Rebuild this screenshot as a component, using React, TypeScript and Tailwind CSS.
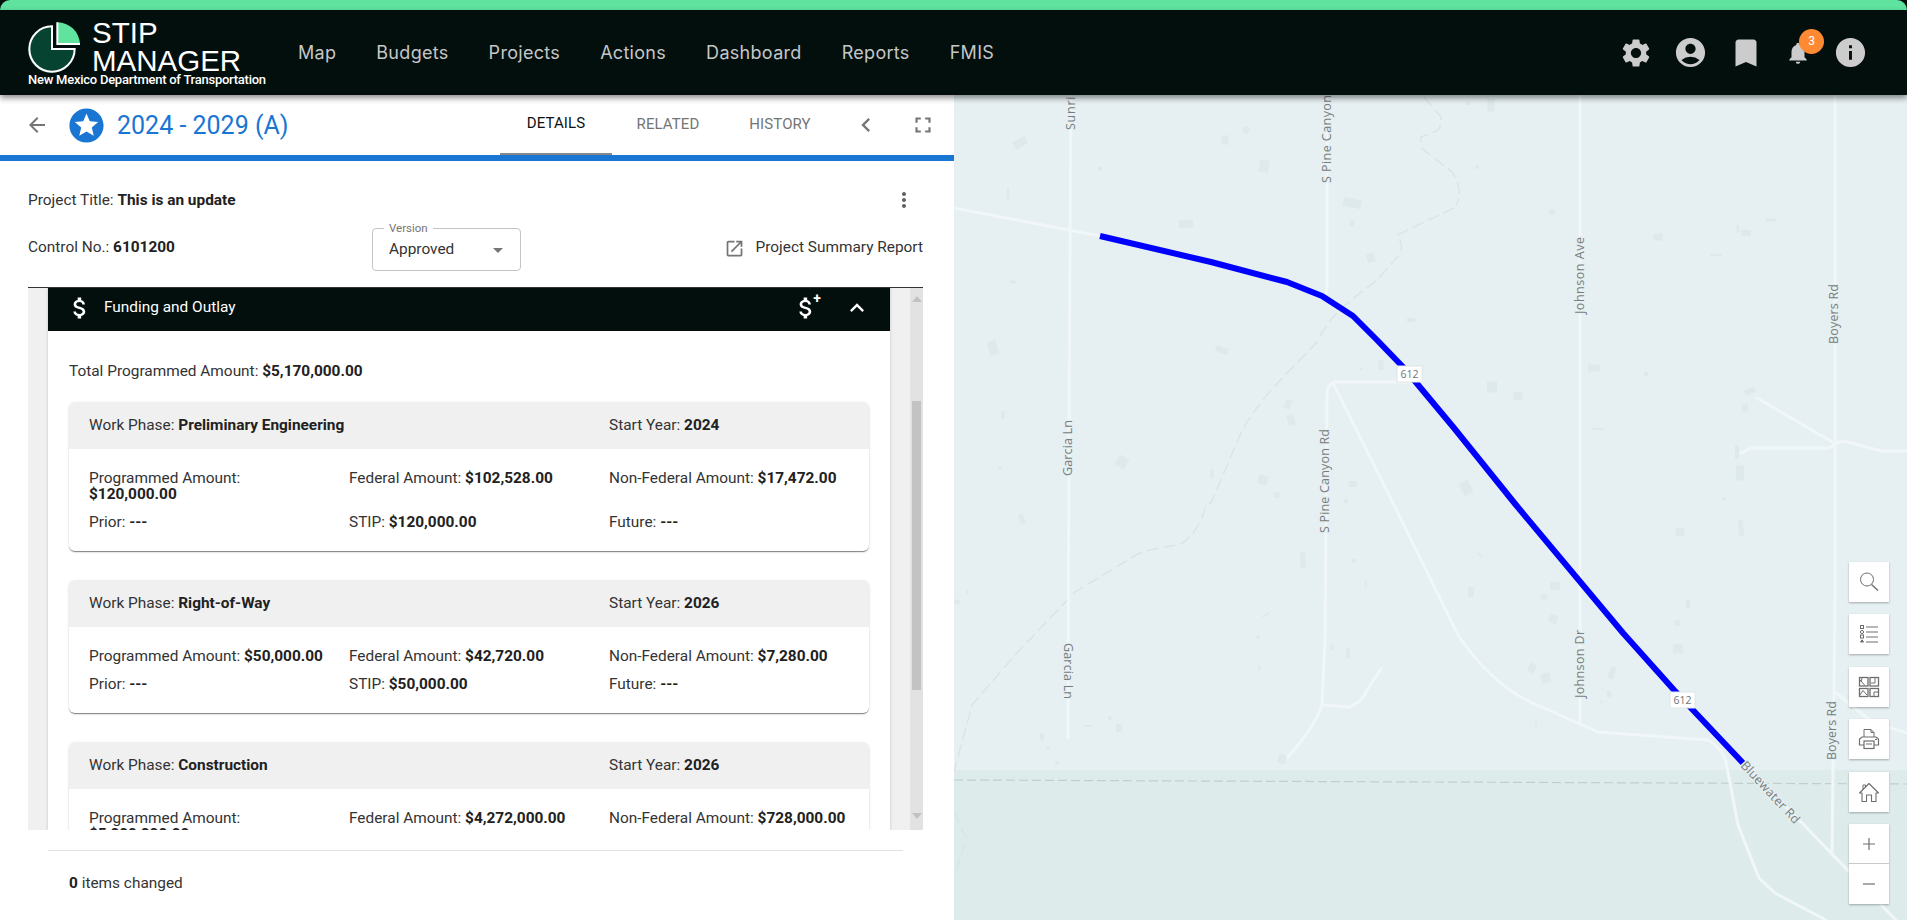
import React from "react";
import {
  MdSettings, MdAccountCircle, MdBookmark, MdNotifications, MdInfo, MdArrowBack, MdStars,
  MdChevronLeft, MdFullscreen, MdMoreVert, MdOpenInNew, MdArrowDropDown, MdAttachMoney, MdExpandLess,
} from "react-icons/md";

const NAV = ["Map", "Budgets", "Projects", "Actions", "Dashboard", "Reports", "FMIS"];

function Logo() {
  return (
    <svg viewBox="25 55 165 165" className="w-[55px] h-[55px] shrink-0">
      <path d="M94 78 A68 68 0 1 0 162 146 L94 146 Z" fill="#0a5a40" />
      <path d="M97 74 A68 68 0 1 0 165 142 L97 142 Z" fill="#064331" stroke="#fff" strokeWidth="6" />
      <path d="M113 62 A68 68 0 0 1 181 127 L113 127 Z" fill="#5fe39f" />
      <path d="M113 62 V127 H181" fill="none" stroke="#fff" strokeWidth="6" />
    </svg>
  );
}

function B({ children }: { children: React.ReactNode }) {
  return <b className="font-bold text-[#212121]">{children}</b>;
}

function Cell({ label, value }: { label: string; value: string }) {
  return (
    <div className="pr-6 leading-4 [&:nth-child(3n)]:pr-0">
      {label}: <B>{value}</B>
    </div>
  );
}

function PhaseCard({ phase, year, rows }: { phase: string; year: string; rows: string[][] }) {
  return (
    <div className="rounded-md bg-white shadow-[0_2px_1px_-1px_rgba(0,0,0,0.3),0_1px_1px_0_rgba(0,0,0,0.2),0_1px_3px_0_rgba(0,0,0,0.12)] shrink-0">
      <div className="h-[47px] rounded-t-md bg-[#f0f0f0] pl-5 pt-[1px] grid grid-cols-3 items-center">
        <div className="col-span-2">Work Phase: <B>{phase}</B></div>
        <div>Start Year: <B>{year}</B></div>
      </div>
      <div className="pl-5 pt-[21px] pb-[21px] grid grid-cols-3 gap-y-3">
        {rows.map(([l, v]) => (
          <Cell key={l} label={l} value={v} />
        ))}
      </div>
    </div>
  );
}

const BUILDINGS: number[][] = [
  [1020,143,14,8,-30],[1225,140,7,9,0],[1246,130,6,6,20],[1264,166,10,12,10],[1100,169,4,4,0],[1008,193,2,11,0],
  [1352,203,18,9,10],[1352,223,5,7,10],[1186,224,14,8,-5],[1371,258,8,9,-15],[1013,282,6,3,10],[1411,320,8,4,0],
  [993,348,9,14,-15],[1222,350,13,6,20],[1381,365,5,10,0],[1361,369,3,3,0],[1288,404,6,9,20],[1291,420,7,11,-15],
  [1003,415,3,8,0],[1122,462,11,11,30],[1263,480,10,9,20],[1353,484,8,6,0],[1277,495,5,5,10],[1212,474,3,10,-5],
  [1000,468,3,3,0],[1346,501,4,4,0],[1491,105,7,13,0],[1468,103,4,4,0],[1477,167,3,4,0],[1552,212,6,5,0],
  [1658,237,9,7,0],[1746,233,10,6,5],[1738,229,3,7,0],[1771,220,11,3,0],[1716,255,12,2,0],[1594,368,12,7,0],
  [1646,374,4,4,0],[1492,387,10,11,0],[1518,396,9,8,10],[1598,429,12,2,0],[1750,391,11,5,-20],[1745,408,6,7,-15],
  [1737,452,4,13,0],[1740,473,8,15,0],[1466,488,10,13,-30],[1724,499,4,3,0],[1022,519,5,10,-25],[1303,560,5,15,-5],
  [1354,561,4,4,0],[1366,584,2,7,-5],[1680,532,9,8,0],[1741,528,5,15,-5],[1480,555,7,2,35],[1555,586,10,8,0],
  [1471,592,6,10,5],[1544,597,6,6,20],[1553,619,8,8,15],[1677,623,6,5,0],[1678,649,10,9,0],[1688,604,4,8,0],
  [1332,647,3,5,0],[1348,653,4,10,0],[1258,637,3,3,0],[1259,668,2,5,0],[1532,668,7,9,20],[1546,678,9,10,-15],
  [1612,673,6,12,20],[1609,694,4,6,-15],[1601,702,3,3,0],[1536,725,2,5,0],[1042,737,4,7,0],[1048,748,3,3,0],
  [1110,718,3,4,0],[1119,728,6,8,0],[1088,726,7,2,0],[1057,763,3,4,0],[1282,759,8,9,15],[956,602,7,4,10],[967,592,2,4,10],
  [1266,615,8,1.5,-30],
];

const ROADS = [
  "M954 208 L1100 236",
  "M1071 95 L1069 420 L1068 738",
  "M1327 95 V288 Q1327 294 1323 298",
  "M1414 382 H1338 Q1327 382 1327 395 L1325 640 L1322 705 Q1316 725 1288 757",
  "M1325 705 L1349 707 Q1362 703 1367 690 L1381 669",
  "M1334 385 L1394 505 L1458 635 Q1495 690 1544 708 L1598 732 L1708 740 Q1722 748 1726 762 L1738 825 L1759 878 L1775 893 L1826 920",
  "M1580 95 V723",
  "M1835 95 V600 L1832 855",
  "M1743 763 L1802 823 L1896 920",
  "M1835 692 L1872 722 L1907 733",
  "M1757 398 L1834 443 L1844 441 L1881 451 H1907",
  "M1741 453 L1751 448 H1829 L1838 443",
];

function MapLabel({ x, y, len, text, angle = -90 }: { x: number; y: number; len: number; text: string; angle?: number }) {
  return (
    <text
      transform={`translate(${x} ${y}) rotate(${angle})`}
      textLength={len}
      lengthAdjust="spacing"
      fontFamily="'Open Sans', sans-serif"
      fontSize="12.5"
      fill="#767e80"
      stroke="#e6eff1"
      strokeWidth="2.5"
      paintOrder="stroke"
    >
      {text}
    </text>
  );
}

function Shield({ x, y }: { x: number; y: number }) {
  return (
    <g>
      <rect x={x} y={y} width="25" height="16" fill="#fff" stroke="#dfe6e8" strokeWidth="1" />
      <text x={x + 12.5} y={y + 12} textAnchor="middle" fontFamily="'Open Sans', sans-serif" fontSize="10.5" fill="#6f7476">612</text>
    </g>
  );
}

function MapArt() {
  return (
    <svg viewBox="954 95 953 825" className="w-full h-full block">
      <rect x="954" y="95" width="953" height="825" fill="#e6eff1" />
      <rect x="954" y="770" width="953" height="150" fill="#deebeb" />
      {BUILDINGS.map(([x, y, w, h, r], i) => (
        <rect key={i} x={x - w / 2} y={y - h / 2} width={w} height={h} fill="#dee9eb" transform={`rotate(${r} ${x} ${y})`} />
      ))}
      <path
        d="M1424 97 L1441 117 Q1442 130 1434 132 L1421 137 Q1420 147 1424 150 L1452 172 Q1464 190 1456 205 M1454 208 L1397 235 Q1404 245 1400 254 L1377 280 L1345 305 Q1328 320 1317 342 L1271 390 Q1250 415 1241 433 L1211 503 L1206 505 Q1198 535 1179 545 Q1150 548 1136 555 Q1095 580 1075 592 L1015 655 L972 705 L954 772 M954 812 L966 838 L954 878"
        fill="none"
        stroke="#d8e3e5"
        strokeWidth="1.3"
        strokeDasharray="12 5"
      />
      <path d="M954 780 L1907 784" fill="none" stroke="#c3cdcd" strokeWidth="1.2" strokeDasharray="9 4" />
      {ROADS.map((d, i) => (
        <path key={i} d={d} fill="none" stroke="#f1f7f8" strokeWidth="3" strokeLinejoin="round" strokeLinecap="round" />
      ))}
      <path
        d="M1100 236 L1211 262 L1287 282 L1322 296 L1353 316 L1377 340 L1404 368 L1424 392 L1454 428 L1516 505 L1623 633 L1674 690 L1743 763"
        fill="none"
        stroke="#0000ff"
        strokeWidth="6"
        strokeLinejoin="round"
      />
      <MapLabel x={1075} y={130} len={48} text="Sunrise" />
      <MapLabel x={1072} y={476} len={56} text="Garcia Ln" />
      <MapLabel x={1064} y={643} len={56} text="Garcia Ln" angle={90} />
      <MapLabel x={1331} y={183} len={88} text="S Pine Canyon" />
      <MapLabel x={1329} y={533} len={104} text="S Pine Canyon Rd" />
      <MapLabel x={1584} y={314} len={77} text="Johnson Ave" />
      <MapLabel x={1584} y={698} len={68} text="Johnson Dr" />
      <MapLabel x={1838} y={344} len={60} text="Boyers Rd" />
      <MapLabel x={1836} y={760} len={59} text="Boyers Rd" />
      <MapLabel x={1740} y={766} len={80} text="Bluewater Rd" angle={47} />
      <Shield x={1397} y={366} />
      <Shield x={1670} y={692} />
    </svg>
  );
}

function Ctl({ children, className = "" }: { children: React.ReactNode; className?: string }) {
  return <button className={`w-10 h-10 bg-white flex items-center justify-center ${className}`}>{children}</button>;
}

function I({ children }: { children: React.ReactNode }) {
  return (
    <svg viewBox="0 0 24 24" width="24" height="24" fill="none" stroke="#6e6e6e" strokeWidth="1">
      {children}
    </svg>
  );
}

const ctlShadow = "shadow-[0_1px_2px_rgba(0,0,0,0.3)]";

function MapControls() {
  return (
    <div className="absolute right-[18px] bottom-4 flex flex-col gap-[12.4px]">
      <Ctl className={ctlShadow}><I><circle cx="10" cy="9.5" r="6.5" /><path d="M14.5 14.5 L21 20.5" strokeWidth="1.4" /></I></Ctl>
      <Ctl className={ctlShadow}>
        <I>
          <rect x="3.5" y="3.5" width="3" height="3" />
          <circle cx="5" cy="10" r="1.6" />
          <rect x="3.5" y="13" width="3" height="3" />
          <path d="M3.5 20 L5 17.8 L6.5 20 Z" fill="#6e6e6e" />
          <path d="M9 5 H21 M9 10 H21 M9 15 H21 M9 20 H21" />
        </I>
      </Ctl>
      <Ctl className={ctlShadow}>
        <I>
          <rect x="2.5" y="2.5" width="8.5" height="8.5" strokeWidth="1.3" />
          <rect x="13" y="2.5" width="8.5" height="8.5" strokeWidth="1.3" />
          <rect x="2.5" y="13.5" width="8.5" height="8" strokeWidth="1.3" />
          <rect x="13" y="13.5" width="8.5" height="8" strokeWidth="1.3" />
          <path d="M3 5 L8 10.5 M5 3 L4 7 M14 8 H18 V3 M3 20 L6 15.5 L10 20 M17 21 V17 H21" />
        </I>
      </Ctl>
      <Ctl className={ctlShadow}>
        <I>
          <path d="M7 10 V2.5 H14 L17 5.5 V10" />
          <path d="M14 2.5 V5.5 H17" />
          <path d="M7 18 H2.5 V12 L5 10 H19 L21.5 12 V18 H17" strokeWidth="1.2" />
          <rect x="7" y="14" width="10" height="7.5" strokeWidth="1.2" />
          <path d="M9 17 H15 M18 12.5 H20" />
        </I>
      </Ctl>
      <Ctl className={ctlShadow}>
        <I>
          <path d="M2.5 13 L12 3.5 L21.5 13 L19 13 V21.5 H14.5 V15 H9.5 V21.5 H5 V13 Z" strokeWidth="1.1" strokeLinejoin="round" />
          <path d="M6 9.5 V5 H8.5 V7" />
        </I>
      </Ctl>
      <div className={`flex flex-col divide-y divide-[#c9c9c9] ${ctlShadow}`}>
        <Ctl><I><path d="M12 6 V18 M6 12 H18" strokeWidth="1.2" /></I></Ctl>
        <Ctl><I><path d="M6 12 H18" strokeWidth="1.2" /></I></Ctl>
      </div>
    </div>
  );
}

function ScrollBar() {
  return (
    <div className="w-[13px] bg-[#e2e2e2] flex flex-col items-center shrink-0">
      <div className="mt-[8px] w-0 h-0 border-x-[5px] border-x-transparent border-b-[6px] border-b-[#c2c2c2]" />
      <div className="mt-[99px] w-[9px] h-[289px] bg-[#c3c3c3]" />
      <div className="mt-[123px] w-0 h-0 border-x-[5px] border-x-transparent border-t-[6px] border-t-[#c2c2c2]" />
    </div>
  );
}

export default function App() {
  return (
    <div className="h-screen w-full overflow-hidden bg-[#030f0d] flex flex-col text-[15.4px] text-[#333] font-[family-name:Roboto,sans-serif]">
      <div className="h-[10px] shrink-0 rounded-t-[10px] bg-[#5fe39f]" />
      <header className="relative z-10 h-[85px] shrink-0 bg-[#030f0d] flex items-center shadow-[0_3px_6px_rgba(0,0,0,0.45)]">
        <div className="w-[298px] shrink-0 self-start pl-[28px] pt-[9px] text-white flex flex-col">
          <div className="flex items-center h-[56px] gap-[9px]">
            <Logo />
            <div className="flex flex-col font-[family-name:'Liberation_Sans',sans-serif] text-[29.5px] leading-[28px] font-normal">
              <span>STIP</span>
              <span>MANAGER</span>
            </div>
          </div>
          <span className="-mt-[2px] text-[13px] leading-[14px] font-medium tracking-[-0.25px] whitespace-nowrap">New Mexico Department of Transportation</span>
        </div>
        <nav className="flex items-center gap-[40px] font-[family-name:Inter,sans-serif] text-[18px] tracking-[0.3px] text-[#c6c6c6]">
          {NAV.map((n) => (
            <span key={n}>{n}</span>
          ))}
        </nav>
        <div className="ml-auto pr-[29px] flex items-center text-[#cccccc]">
          <div className="w-[55px] flex justify-center"><MdSettings size={34} /></div>
          <div className="w-[55px] flex justify-center"><MdAccountCircle size={35} /></div>
          <div className="w-[55px] flex justify-center"><MdBookmark size={36} /></div>
          <div className="relative w-[50px] flex justify-center">
            <MdNotifications size={26} />
            <span className="absolute left-[26px] -top-[11px] w-[25px] h-[25px] rounded-full bg-[#ff8a33] text-white text-xs flex items-center justify-center">3</span>
          </div>
          <div className="w-[55px] flex justify-center"><MdInfo size={35} /></div>
        </div>
      </header>

      <main className="flex-1 min-h-0 flex bg-white">
        <section className="w-[954px] shrink-0 flex flex-col bg-white">
          <div className="h-[66px] shrink-0 border-b-[6px] border-[#1976d2] flex">
            <div className="flex-1 flex items-center pl-[25px]">
              <MdArrowBack size={24} className="text-[#757575]" />
              <MdStars size={41} className="text-[#1976d2] ml-[17px]" />
              <span className="ml-[10px] pt-[1px] text-[25px] text-[#1976d2]">2024 - 2029 (A)</span>
            </div>
            <div className="flex items-stretch uppercase text-[#757575] tracking-[0.1px] text-[15px]">
              <div className="w-[112px] flex items-center justify-center text-[#111] border-b-2 border-[#888] pb-[2px]">Details</div>
              <div className="w-[112px] flex items-center justify-center pb-[2px]">Related</div>
              <div className="w-[112px] flex items-center justify-center pb-[2px]">History</div>
            </div>
            <div className="w-[118px] flex items-center text-[#757575] pl-[16px]">
              <MdChevronLeft size={28} />
              <MdFullscreen size={26} className="ml-[30px]" />
            </div>
          </div>

          <div className="flex-1 min-h-0 flex flex-col pl-[28px] pr-[31px]">
            <div className="h-[47px] mt-[16px] flex items-center justify-between shrink-0">
              <div>Project Title: <B>This is an update</B></div>
              <MdMoreVert size={24} className="text-[#616161] -mr-[-7px] -mt-[2px]" />
            </div>
            <div className="relative h-[63px] shrink-0 flex items-start">
              <div className="w-[344px] pt-[8px] h-[40px] leading-[30px]">Control No.: <B>6101200</B></div>
              <div className="relative w-[149px] h-[43px] mt-[4px] border border-[#c4c4c4] rounded flex items-center pl-[16px] text-[#333]">
                <span className="absolute left-[11px] -top-[7px] bg-white px-[5px] text-[11.5px] leading-3 text-[#757575]">Version</span>
                <span>Approved</span>
                <MdArrowDropDown size={24} className="absolute right-[10px] text-[#757575]" />
              </div>
              <div className="ml-auto h-[40px] pt-[8px] flex items-center gap-[11px]">
                <MdOpenInNew size={21} className="text-[#757575]" />
                <span>Project Summary Report</span>
              </div>
            </div>

            <div className="h-[543px] shrink-0 border-t border-[#333] bg-[#f0f0f0] pl-[20px] flex overflow-hidden">
              <div className="w-[842px] shrink-0 bg-white flex flex-col shadow-[0_0_3px_rgba(0,0,0,0.2)]">
                <div className="h-[43px] shrink-0 bg-[#030f0d] text-white flex items-center pl-[18px] pb-[4px]">
                  <MdAttachMoney size={28} />
                  <span className="ml-[10px]">Funding and Outlay</span>
                  <span className="ml-auto relative flex">
                    <MdAttachMoney size={28} />
                    <span className="absolute right-[-1px] -top-[2px] text-[14px] leading-[13px] font-bold">+</span>
                  </span>
                  <MdExpandLess size={28} className="ml-[23px] mr-[19px]" />
                </div>
                <div className="flex-1 min-h-0 px-[21px] flex flex-col overflow-hidden">
                  <div className="mt-[32px] leading-4">Total Programmed Amount: <B>$5,170,000.00</B></div>
                  <div className="mt-[23px] flex flex-col gap-[29px]">
                    <PhaseCard
                      phase="Preliminary Engineering"
                      year="2024"
                      rows={[["Programmed Amount", "$120,000.00"], ["Federal Amount", "$102,528.00"], ["Non-Federal Amount", "$17,472.00"], ["Prior", "---"], ["STIP", "$120,000.00"], ["Future", "---"]]}
                    />
                    <PhaseCard
                      phase="Right-of-Way"
                      year="2026"
                      rows={[["Programmed Amount", "$50,000.00"], ["Federal Amount", "$42,720.00"], ["Non-Federal Amount", "$7,280.00"], ["Prior", "---"], ["STIP", "$50,000.00"], ["Future", "---"]]}
                    />
                    <PhaseCard
                      phase="Construction"
                      year="2026"
                      rows={[["Programmed Amount", "$5,000,000.00"], ["Federal Amount", "$4,272,000.00"], ["Non-Federal Amount", "$728,000.00"], ["Prior", "---"], ["STIP", "$5,000,000.00"], ["Future", "---"]]}
                    />
                  </div>
                </div>
              </div>
              <div className="w-[20px] shrink-0" />
              <ScrollBar />
            </div>

            <div className="ml-[20px] mr-[20px] mt-[20px] border-t border-[#e0e0e0] pt-[24px] pl-[21px] leading-4 shrink-0">
              <B>0</B> items changed
            </div>
          </div>
        </section>
        <section className="relative flex-1 min-w-0">
          <MapArt />
          <MapControls />
        </section>
      </main>
    </div>
  );
}
